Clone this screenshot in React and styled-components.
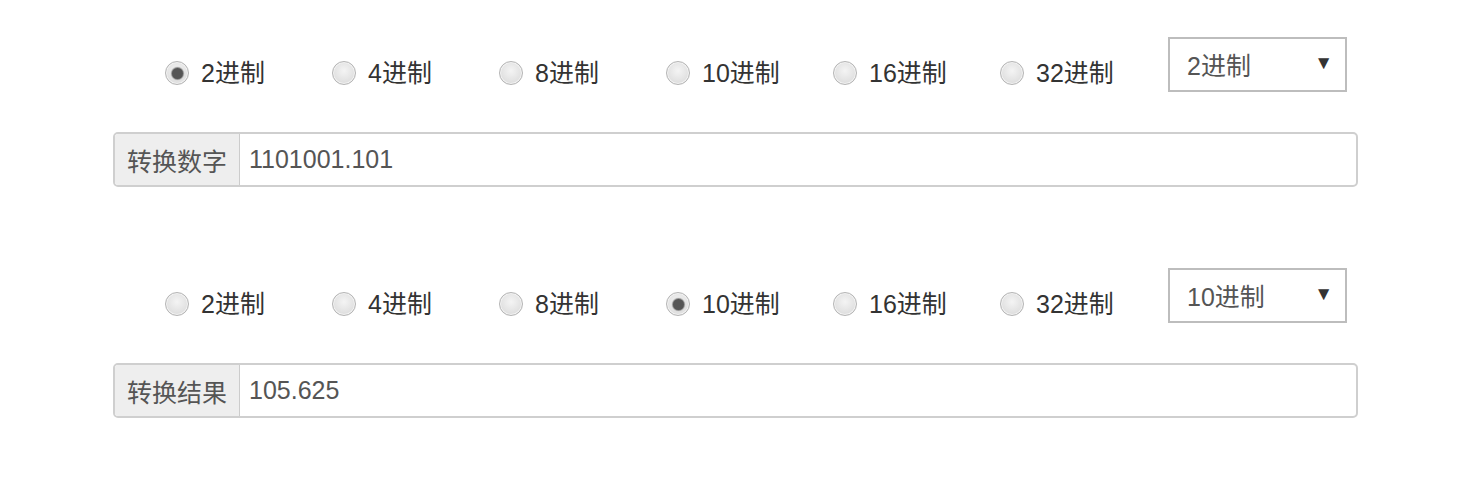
import React from "react";
import styled, { createGlobalStyle } from "styled-components";

const Global = createGlobalStyle`
  html, body { margin: 0; padding: 0; background: #fff; }
  body { font-family: "Liberation Sans", Arial, "Noto Sans CJK SC", sans-serif; color: #333; }
`;

const Page = styled.div`
  width: 1245px;
  margin: 0 auto;
  padding-top: 37px;
`;

const Section = styled.section`
  display: flex;
  flex-direction: column;
  margin-bottom: 81px;
`;

const Toolbar = styled.div`
  display: flex;
  align-items: flex-start;
  padding-left: 52px;
  padding-right: 11px;
  height: 55px;
`;

const RadioGroup = styled.div`
  display: flex;
  padding-top: 24px;
`;

const RadioLabel = styled.label`
  display: flex;
  align-items: center;
  width: 167px;
  font-size: 25px;
  line-height: 24px;
  color: #333;
  cursor: pointer;
  &:last-child { width: auto; }
`;

const RadioDot = styled.span`
  box-sizing: border-box;
  width: 24px;
  height: 24px;
  border-radius: 50%;
  border: 1px solid #b5b5b5;
  background: radial-gradient(circle at 50% 40%, #f4f4f4 0%, #e2e2e2 60%, #d2d2d2 100%);
  box-shadow: inset 0 0 0 1px #f2f2f2;
  margin-right: 12px;
  display: flex;
  align-items: center;
  justify-content: center;
  flex-shrink: 0;
  &::after {
    content: "";
    width: 11px;
    height: 11px;
    border-radius: 50%;
    background: #555;
    box-shadow: 0 0 1px 1px #8a8a8a;
    display: ${(p) => (p.$checked ? "block" : "none")};
  }
`;

const Select = styled.div`
  box-sizing: border-box;
  margin-left: auto;
  width: 179px;
  height: 55px;
  border: 2px solid #bdbdbd;
  display: flex;
  align-items: center;
  justify-content: space-between;
  padding: 0 12px 2px 17px;
  font-size: 25px;
  color: #555;
`;

const Arrow = styled.span`
  font-size: 19px;
  color: #333;
  margin-top: -2px;
`;

const InputGroup = styled.div`
  box-sizing: border-box;
  margin-top: 40px;
  display: flex;
  height: 55px;
  border: 2px solid #cfcfcf;
  border-radius: 5px;
  overflow: hidden;
`;

const Addon = styled.span`
  box-sizing: border-box;
  width: 125px;
  display: flex;
  align-items: center;
  justify-content: center;
  background: #eee;
  border-right: 1px solid #ccc;
  font-size: 25px;
  color: #555;
`;

const Field = styled.div`
  flex: 1;
  display: flex;
  align-items: center;
  padding-left: 9px;
  font-size: 25px;
  color: #555;
`;

const bases = [2, 4, 8, 10, 16, 32];

function Converter({ checked, label, value }) {
  return (
    <Section>
      <Toolbar>
        <RadioGroup>
          {bases.map((b) => (
            <RadioLabel key={b}>
              <RadioDot $checked={b === checked} />
              {b}进制
            </RadioLabel>
          ))}
        </RadioGroup>
        <Select>
          <span>{checked}进制</span>
          <Arrow>▼</Arrow>
        </Select>
      </Toolbar>
      <InputGroup>
        <Addon>{label}</Addon>
        <Field>{value}</Field>
      </InputGroup>
    </Section>
  );
}

export default function App() {
  return (
    <>
      <Global />
      <Page>
        <Converter checked={2} label="转换数字" value="1101001.101" />
        <Converter checked={10} label="转换结果" value="105.625" />
      </Page>
    </>
  );
}
